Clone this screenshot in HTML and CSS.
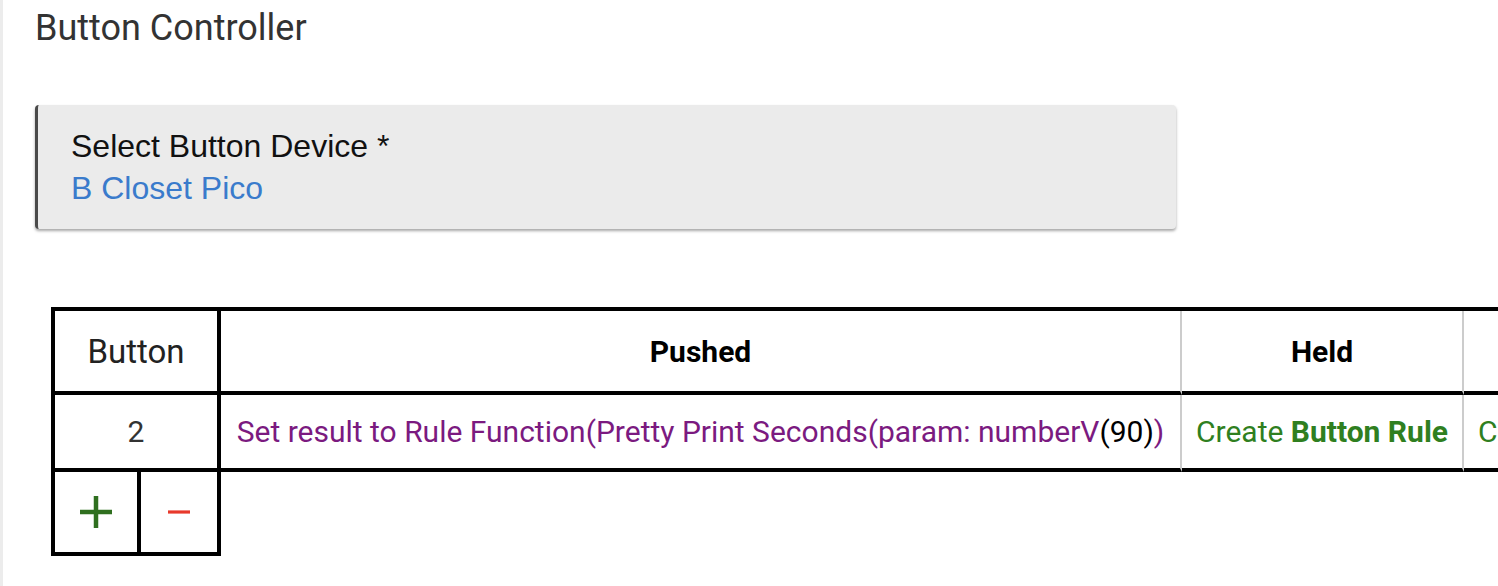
FILE: index.html
```html
<!DOCTYPE html>
<html>
<head>
<meta charset="utf-8">
<link rel="stylesheet" href="styles.css">
</head>
<body>
<div class="page">
  <h1 class="title">Button Controller</h1>
  <div class="card">
    <div class="card-label">Select Button Device *</div>
    <div class="card-value">B Closet Pico</div>
  </div>
  <table class="grid">
    <colgroup>
      <col class="c-plus">
      <col class="c-minus">
      <col class="c-pushed">
      <col class="c-held">
      <col class="c-rel">
    </colgroup>
    <tr class="head">
      <th colspan="2" class="btn-head dark">Button</th>
      <th class="bold light">Pushed</th>
      <th class="bold light">Held</th>
      <th class="bold light">Released</th>
    </tr>
    <tr class="data">
      <td colspan="2" class="num dark">2</td>
      <td class="light action"><span class="purple">Set result to Rule Function(Pretty Print Seconds(param: numberV</span>(90)<span class="purple">)</span></td>
      <td class="light action green">Create <b>Button Rule</b></td>
      <td class="light action green">Create <b>Button Rule</b></td>
    </tr>
    <tr class="tools">
      <td class="tool dark">
        <svg width="34" height="34" viewBox="0 0 34 34"><path d="M17 1V33M1 17H33" stroke="#2f6f1f" stroke-width="4.5" fill="none"/></svg>
      </td>
      <td class="tool dark">
        <svg width="22" height="6" viewBox="0 0 22 6"><path d="M0 3H22" stroke="#e8392b" stroke-width="3.2" fill="none"/></svg>
      </td>
      <td colspan="3" class="empty"></td>
    </tr>
  </table>
</div>
</body>
</html>
```
FILE: styles.css
```css
html, body {
  margin: 0;
  padding: 0;
  background: #fff;
}
.page {
  border-left: 3px solid #ececec;
  min-height: 586px;
  padding-left: 32px;
  box-sizing: border-box;
  font-family: Roboto, "Noto Sans", sans-serif;
}
.title {
  margin: 0;
  padding-top: 6px;
  font-size: 36px;
  font-weight: 400;
  color: #333;
  line-height: 44px;
}
.card {
  margin-top: 55px;
  width: 1141px;
  box-sizing: border-box;
  background: #ebebeb;
  border-left: 3px solid #4a4a4a;
  border-radius: 4px;
  padding: 20px 33px;
  box-shadow: 0 2px 3px rgba(0, 0, 0, 0.35);
  font-family: "Liberation Sans", Arial, sans-serif;
  font-size: 32px;
  line-height: 42px;
}
.card-label {
  color: #111;
}
.card-value {
  color: #3a7bcc;
}
.grid {
  margin-top: 78px;
  margin-left: 16px;
  border-collapse: separate;
  border-spacing: 0;
  table-layout: fixed;
  width: 1695px;
  border-top: 4px solid #000;
  border-left: 4px solid #000;
  font-family: Roboto, sans-serif;
  font-size: 30px;
  color: #222;
}
.c-plus { width: 86px; }
.c-minus { width: 80px; }
.c-pushed { width: 961px; }
.c-held { width: 282px; }
.c-rel { width: 282px; }
.grid th, .grid td {
  padding: 0;
  text-align: center;
  vertical-align: middle;
  white-space: nowrap;
}
.head th {
  height: 80px;
  border-bottom: 4px solid #000;
}
.data td {
  height: 73px;
  border-bottom: 4px solid #000;
}
.tools td {
  height: 80px;
}
.dark {
  border-right: 4px solid #000;
}
.light {
  border-right: 2px solid #ccc;
}
.btn-head {
  font-weight: 400;
  font-size: 33px;
  color: #222;
}
.bold {
  font-weight: 700;
  color: #000;
}
.num {
  color: #333;
}
.action {
  color: #000;
}
.purple {
  color: #7b1a80;
}
.green {
  color: #2f7f20;
}
.green b {
  font-weight: 700;
}
.tool {
  border-bottom: 4px solid #000;
}
.tool svg {
  display: block;
  margin: 0 auto;
}
.empty {
  border: none;
}
```
